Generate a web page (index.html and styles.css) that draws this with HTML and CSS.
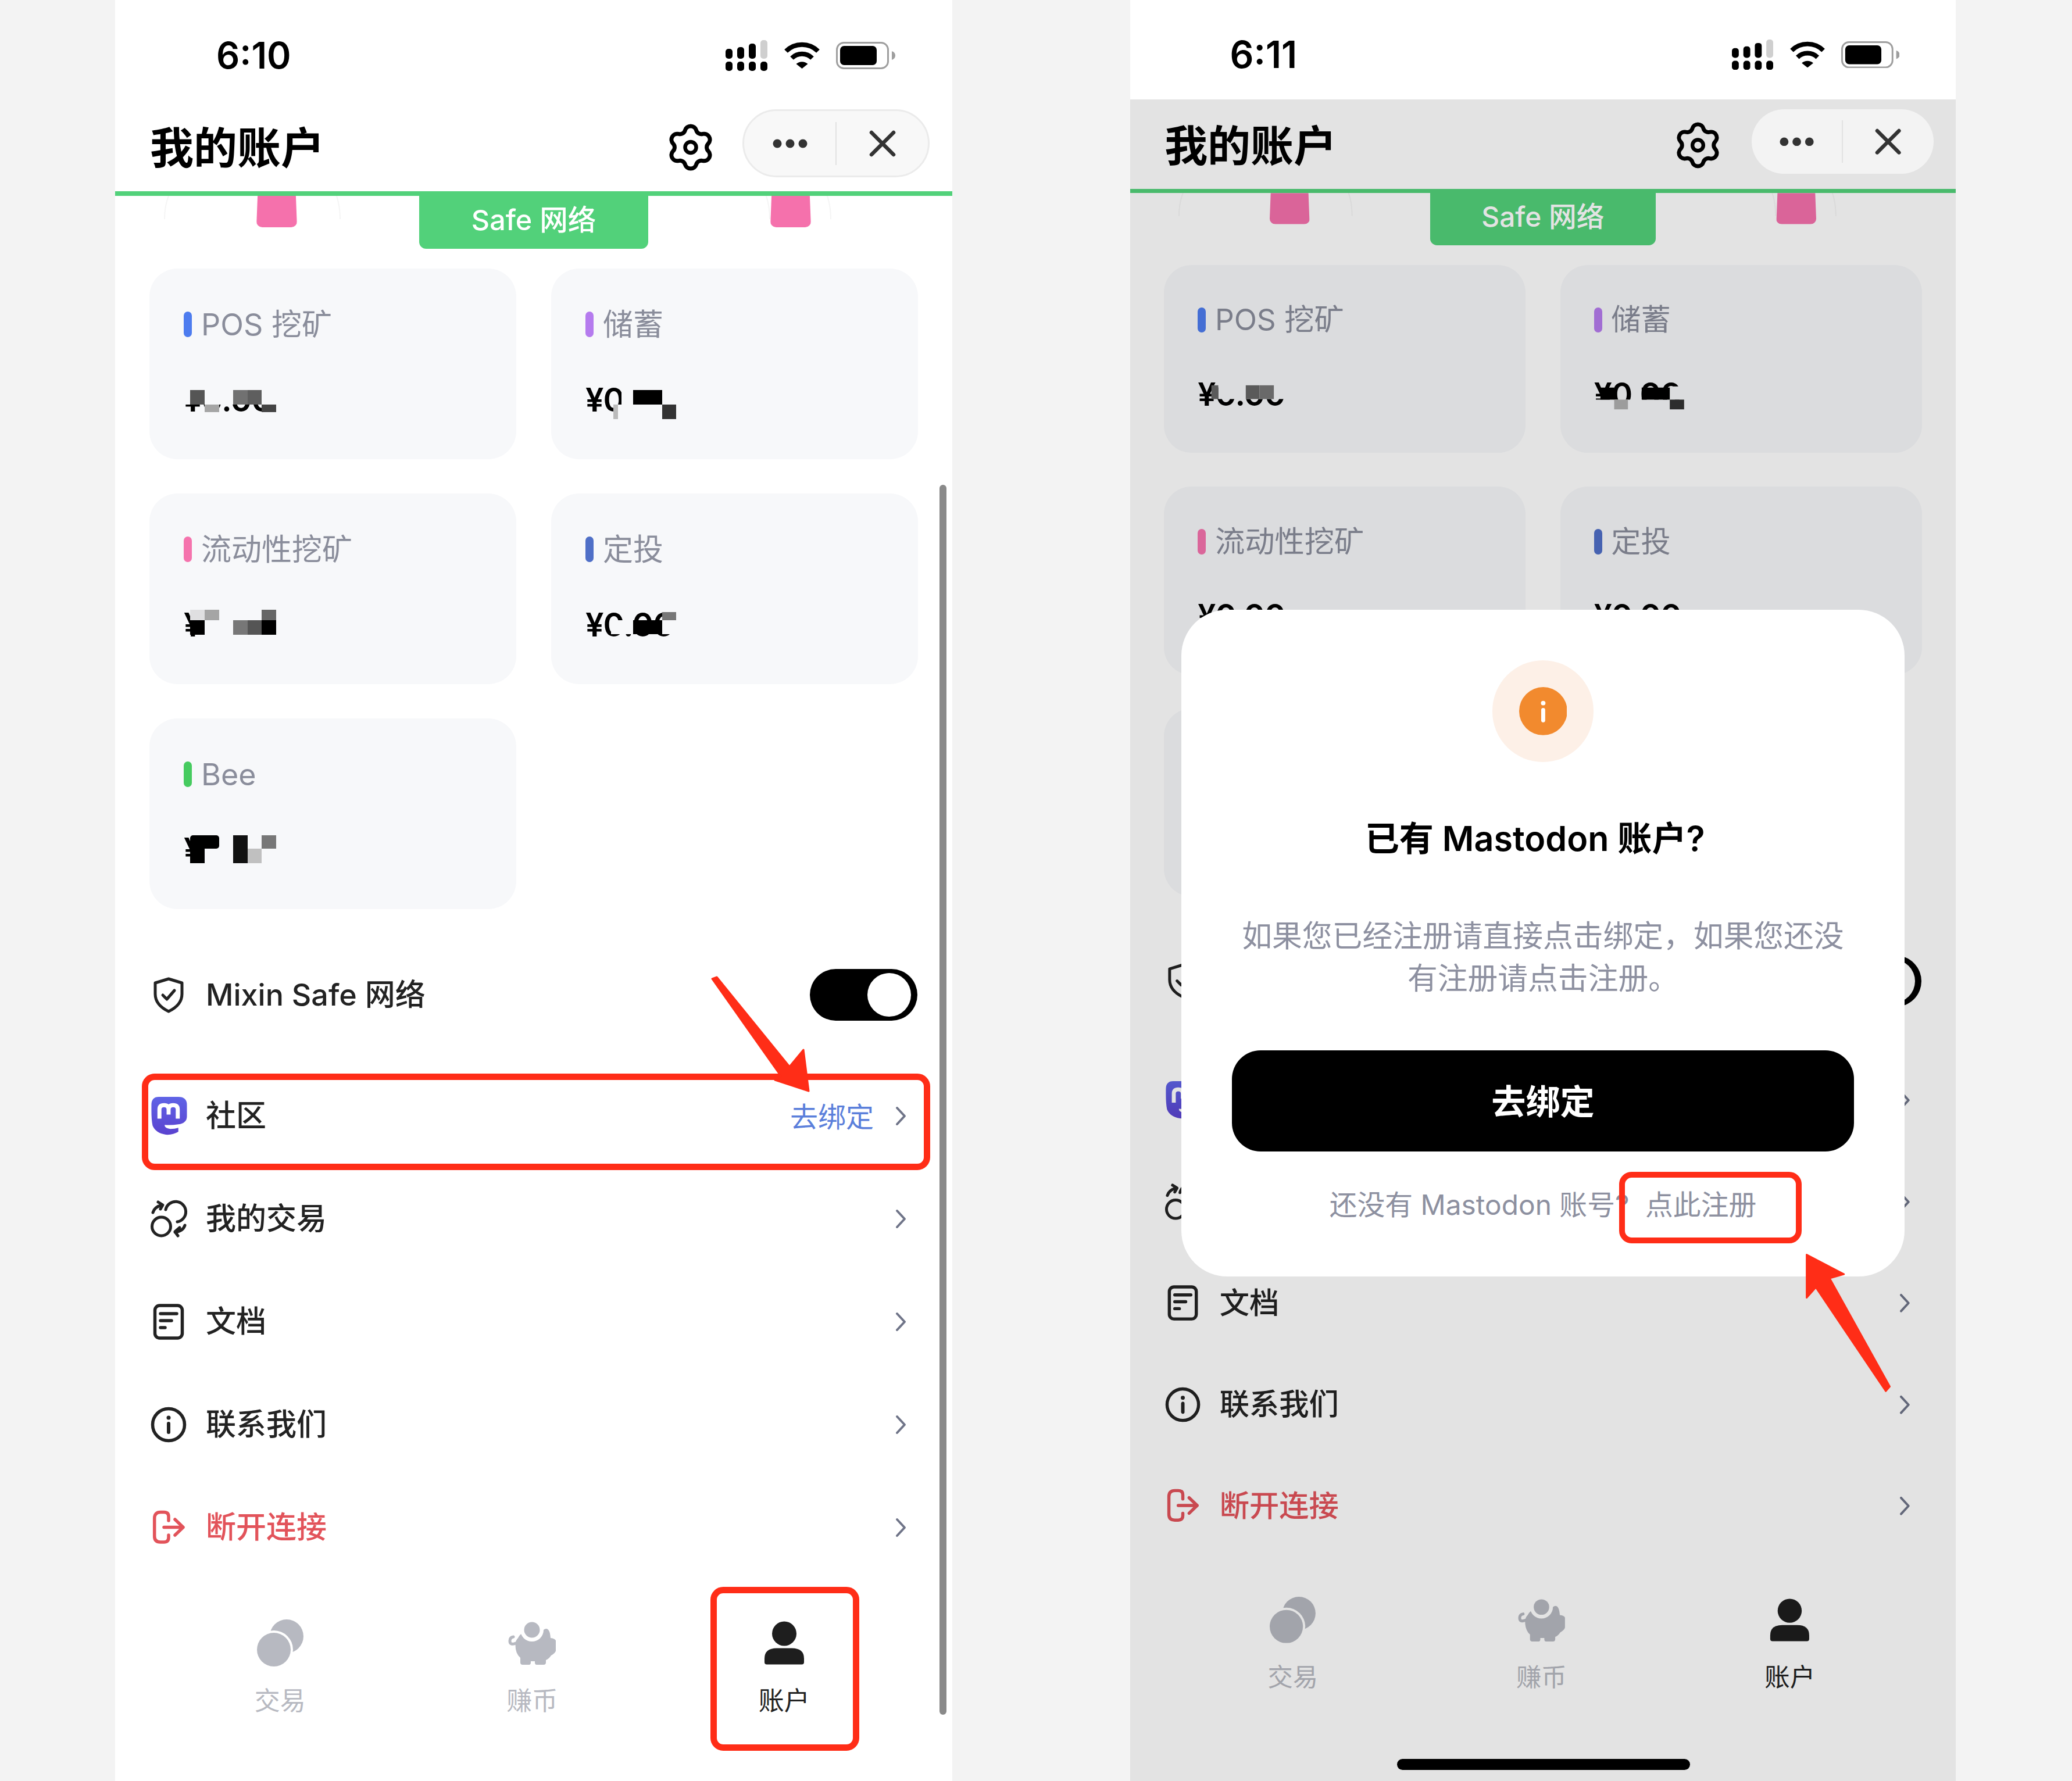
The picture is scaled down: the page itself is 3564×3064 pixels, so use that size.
FILE: index.html
```html
<!DOCTYPE html>
<html lang="zh">
<head>
  <meta charset="UTF-8">
  <title>我的账户</title>
  <link rel="stylesheet" href="styles.css">
</head>
<body>
  <svg class="sprite" width="0" height="0">
    <defs>
      <linearGradient id="masto" x1="0" y1="0" x2="0" y2="1">
        <stop offset="0" stop-color="#5f63e6"/>
        <stop offset="1" stop-color="#5a42cf"/>
      </linearGradient>
    </defs>
    <symbol id="i-signal" viewBox="0 0 73 53">
      <rect x="0" y="15" width="12" height="17" rx="5"/>
      <rect x="20" y="12" width="12" height="20" rx="5"/>
      <rect x="40" y="6" width="12" height="26" rx="5"/>
      <rect x="60" y="0" width="12" height="32" rx="5" fill="#cfcfcf"/>
      <rect x="0" y="37" width="12" height="16" rx="5"/>
      <rect x="20" y="37" width="12" height="16" rx="5"/>
      <rect x="40" y="37" width="12" height="16" rx="5"/>
      <rect x="60" y="37" width="12" height="16" rx="5"/>
    </symbol>
    <symbol id="i-wifi" viewBox="0 0 63 46">
      <path d="M4 16A39 39 0 0 1 59 16" fill="none" stroke="#000" stroke-width="8"/>
      <path d="M14 28A25 25 0 0 1 49 28" fill="none" stroke="#000" stroke-width="8"/>
      <path d="M21.5 38A15 15 0 0 1 41.5 38L31.5 46Z"/>
    </symbol>
    <symbol id="i-battery" viewBox="0 0 102 47">
      <rect x="1.5" y="1.5" width="88" height="44" rx="12" fill="none" stroke="#9e9e9e" stroke-width="3"/>
      <rect x="7" y="7" width="63" height="33" rx="7"/>
      <path d="M96 16Q102 18 102 23.5Q102 29 96 31Z" fill="#9e9e9e"/>
    </symbol>
    <symbol id="i-gear" viewBox="0 0 74 81">
      <path d="M27.42 11.02A10 10 0 0 1 46.58 11.02A9 9 0 0 0 57.74 17.46A10 10 0 0 1 67.32 34.05A9 9 0 0 0 67.32 46.95A10 10 0 0 1 57.74 63.54A9 9 0 0 0 46.58 69.98A10 10 0 0 1 27.42 69.98A9 9 0 0 0 16.26 63.54A10 10 0 0 1 6.68 46.95A9 9 0 0 0 6.68 34.05A10 10 0 0 1 16.26 17.46A9 9 0 0 0 27.42 11.02Z" fill="none" stroke="#000" stroke-width="7" stroke-linejoin="round"/>
      <circle cx="37" cy="40.5" r="9.5" fill="none" stroke="#000" stroke-width="6.5"/>
    </symbol>
    <symbol id="i-shield" viewBox="0 0 66 66">
      <path d="M33 5 L56 12 V31 Q56 50 33 61 Q10 50 10 31 V12Z" fill="none" stroke="#222" stroke-width="5" stroke-linejoin="round"/>
      <path d="M23 33 L30 40 L43 25" fill="none" stroke="#222" stroke-width="5" stroke-linecap="round" stroke-linejoin="round"/>
    </symbol>
    <symbol id="i-masto" viewBox="0 0 66 67">
      <path d="M16 0H50Q65 0 65 14V34Q65 46 50 48Q38 50 26 49Q26 55 36 56Q44 56 50 54V61Q40 67 28 66Q10 63 5 50Q3 40 3 24V14Q3 0 16 0Z" fill="url(#masto)"/>
      <path d="M17 38V22Q17 14.5 25 14.5Q33 14.5 33 22V31M33 22Q33 14.5 41 14.5Q49 14.5 49 22V38" fill="none" stroke="#fff" stroke-width="7"/>
    </symbol>
    <symbol id="i-swap" viewBox="0 0 66 66">
      <circle cx="20.5" cy="46" r="16" fill="none" stroke="#222" stroke-width="5"/>
      <path d="M28 17A17.5 17.5 0 1 1 48 38" fill="none" stroke="#222" stroke-width="5" stroke-linecap="round"/>
      <path d="M6 22Q9 12 22 9M15 4L23 9L19 16" fill="none" stroke="#222" stroke-width="5" stroke-linecap="round" stroke-linejoin="round"/>
      <path d="M61 44Q58 54 44 56M52 48L44 55L49 62" fill="none" stroke="#222" stroke-width="5" stroke-linecap="round" stroke-linejoin="round"/>
    </symbol>
    <symbol id="i-doc" viewBox="0 0 66 66">
      <rect x="9.5" y="5" width="47" height="56" rx="8" fill="none" stroke="#222" stroke-width="5.5"/>
      <path d="M19 19H47M19 31H38M19 43H27" fill="none" stroke="#222" stroke-width="5.5" stroke-linecap="round"/>
    </symbol>
    <symbol id="i-info" viewBox="0 0 66 66">
      <circle cx="33" cy="33" r="27.5" fill="none" stroke="#222" stroke-width="5.5"/>
      <circle cx="33" cy="21" r="3.5" fill="#222"/>
      <path d="M33 31V46" fill="none" stroke="#222" stroke-width="6" stroke-linecap="round"/>
    </symbol>
    <symbol id="i-logout" viewBox="0 0 66 66">
      <path d="M33 21V14Q33 6.5 25 6.5H19Q8.7 6.5 8.7 17V48Q8.7 58 19 58H25Q33 58 33 50V46" fill="none" stroke="#e2535a" stroke-width="5.5" stroke-linecap="round"/>
      <path d="M25 32.5H58M44 19L58 32.5L44 46" fill="none" stroke="#e2535a" stroke-width="5.5" stroke-linecap="round" stroke-linejoin="round"/>
    </symbol>
    <symbol id="i-chevron" viewBox="0 0 19 34">
      <path d="M3 3L16 17L3 31" fill="none" stroke="#6f7488" stroke-width="4" stroke-linecap="round" stroke-linejoin="round"/>
    </symbol>
    <symbol id="i-coins" viewBox="0 0 82 81">
      <circle cx="52" cy="29" r="29"/>
      <circle cx="30" cy="52" r="33" fill="#fff"/>
      <circle cx="30" cy="52" r="29"/>
    </symbol>
    <symbol id="i-piggy" viewBox="0 0 82 81">
      <path d="M17 32Q20 26 24 24L58 24Q60 16 66 16Q72 17 73 32Q82 33 82.5 38V52Q82 58 74 62Q70 68 65 70V74Q65 78 61 78H49Q46 78 46 74V72H39V74Q39 78 36 78H25Q21 78 21 74V66Q12 58 12.5 42Q13 36 17 32Z"/>
      <path d="M13 41Q3 45 3 37Q3 31 9 30" fill="none" stroke="currentColor" stroke-width="5" stroke-linecap="round"/>
      <circle cx="41" cy="18" r="20" fill="#fff"/>
      <circle cx="41" cy="18" r="13.5"/>
    </symbol>
    <symbol id="i-person" viewBox="-7 -3.5 82 81">
      <circle cx="34" cy="21" r="21"/>
      <path d="M0 70V64Q0 46 21 46H47Q68 46 68 64V70Q68 74 64 74H4Q0 74 0 70Z"/>
    </symbol>
  </svg>

  <section class="phone">
    <div class="status">
      <span class="time">6:10</span>
      <div class="status-icons">
        <svg class="ic-signal"><use href="#i-signal"/></svg>
        <svg class="ic-wifi"><use href="#i-wifi"/></svg>
        <svg class="ic-battery"><use href="#i-battery"/></svg>
      </div>
    </div>
    <header class="nav">
      <h1 class="nav-title">我的账户</h1>
      <svg class="ic-gear"><use href="#i-gear"/></svg>
      <div class="capsule">
        <span class="capsule-half">
          <svg class="ic-dots" viewBox="0 0 60 16"><circle cx="8" cy="8" r="7.5"/><circle cx="30" cy="8" r="7.5"/><circle cx="52" cy="8" r="7.5"/></svg>
        </span>
        <span class="capsule-line"></span>
        <span class="capsule-half">
          <svg class="ic-close" viewBox="0 0 46 46"><path d="M4 4L42 42M42 4L4 42"/></svg>
        </span>
      </div>
    </header>
    <div class="banner">
      <svg class="banner-arcs" viewBox="0 0 1440 60"><path d="M92 0Q85 18 85 40M381 0Q387 18 387 40M608 0Q601 18 601 40M700 0Q707 18 707 40M1120 0Q1126 18 1126 40M1225 0Q1231 18 1231 40M1449 0Q1442 18 1442 40M1548 0Q1554 18 1554 40"/></svg>
      <span class="ribbon"></span>
      <span class="banner-tab">Safe 网络</span>
      <span class="ribbon"></span>
    </div>
    <main class="content">
      <div class="cards">
        <div class="card">
          <div class="card-label"><i class="bar bar-blue"></i><span class="card-name">POS 挖矿</span></div>
          <div class="card-value">¥0.00
            <svg class="mosaic" viewBox="0 0 180 60">
              <rect class="hide" x="-4" y="0" width="176" height="36"/>
              <rect x="11" y="11" width="25" height="25" fill="#555"/>
              <rect x="36" y="36" width="25" height="13" fill="#a5a5a5"/>
              <rect x="85" y="11" width="25" height="25" fill="#717171"/>
              <rect x="110" y="11" width="24" height="25" fill="#5e5e5e"/>
              <rect x="134" y="36" width="25" height="13" fill="#444"/>
            </svg>
          </div>
        </div>
        <div class="card">
          <div class="card-label"><i class="bar bar-purple"></i><span class="card-name">储蓄</span></div>
          <div class="card-value">¥0.00
            <svg class="mosaic" viewBox="0 0 180 60">
              <rect class="hide" x="62" y="0" width="100" height="36"/>
              <rect class="hide" x="48" y="36" width="84" height="25"/>
              <rect x="82" y="11" width="50" height="25" fill="#000"/>
              <rect x="48" y="36" width="8" height="25" fill="#bbb"/>
              <rect x="132" y="36" width="24" height="25" fill="#333"/>
            </svg>
          </div>
        </div>
        <div class="card">
          <div class="card-label"><i class="bar bar-pink"></i><span class="card-name">流动性挖矿</span></div>
          <div class="card-value">¥0.00
            <svg class="mosaic" viewBox="0 0 180 60">
              <rect class="hide" x="36" y="0" width="126" height="56"/>
              <rect x="11" y="2" width="25" height="18" fill="#dfdfe1"/>
              <rect x="36" y="2" width="25" height="18" fill="#a5a5a5"/>
              <rect x="11" y="20" width="25" height="25" fill="#000"/>
              <rect x="134" y="2" width="25" height="18" fill="#666"/>
              <rect x="85" y="20" width="25" height="25" fill="#777"/>
              <rect x="110" y="20" width="24" height="25" fill="#555"/>
              <rect x="134" y="20" width="25" height="25" fill="#000"/>
            </svg>
          </div>
        </div>
        <div class="card">
          <div class="card-label"><i class="bar bar-indigo"></i><span class="card-name">定投</span></div>
          <div class="card-value">¥0.00
            <svg class="mosaic" viewBox="0 0 180 60">
              <rect class="hide" x="44" y="20" width="38" height="24"/>
              <rect x="82" y="20" width="50" height="24" fill="#000"/>
              <rect x="132" y="6" width="24" height="14" fill="#777"/>
              <rect class="hide" x="132" y="20" width="24" height="24"/>
            </svg>
          </div>
        </div>
        <div class="card">
          <div class="card-label"><i class="bar bar-green"></i><span class="card-name card-name-plain">Bee</span></div>
          <div class="card-value">¥0.00
            <svg class="mosaic" viewBox="0 0 180 60">
              <rect class="hide" x="36" y="0" width="126" height="56"/>
              <rect x="11" y="3" width="50" height="23" rx="5" fill="#000"/>
              <rect x="11" y="26" width="25" height="25" fill="#000"/>
              <rect x="85" y="3" width="25" height="48" fill="#111"/>
              <rect x="110" y="26" width="24" height="25" fill="#c0c0c0"/>
              <rect x="134" y="3" width="25" height="23" fill="#777"/>
            </svg>
          </div>
        </div>
      </div>
      <div class="row row-safe">
        <svg class="row-icon"><use href="#i-shield"/></svg>
        <span class="row-text">Mixin Safe 网络</span>
        <span class="toggle"></span>
      </div>
      <div class="rows">
        <div class="row">
          <svg class="row-icon"><use href="#i-masto"/></svg>
          <span class="row-text">社区</span>
          <span class="row-extra">去绑定</span>
          <svg class="chevron"><use href="#i-chevron"/></svg>
        </div>
        <div class="row">
          <svg class="row-icon"><use href="#i-swap"/></svg>
          <span class="row-text">我的交易</span>
          <svg class="chevron"><use href="#i-chevron"/></svg>
        </div>
        <div class="row">
          <svg class="row-icon"><use href="#i-doc"/></svg>
          <span class="row-text">文档</span>
          <svg class="chevron"><use href="#i-chevron"/></svg>
        </div>
        <div class="row">
          <svg class="row-icon"><use href="#i-info"/></svg>
          <span class="row-text">联系我们</span>
          <svg class="chevron"><use href="#i-chevron"/></svg>
        </div>
        <div class="row">
          <svg class="row-icon"><use href="#i-logout"/></svg>
          <span class="row-text row-danger">断开连接</span>
          <svg class="chevron"><use href="#i-chevron"/></svg>
        </div>
      </div>
    </main>
    <nav class="tabs">
      <div class="tab"><svg class="tab-icon"><use href="#i-coins"/></svg><span>交易</span></div>
      <div class="tab"><svg class="tab-icon"><use href="#i-piggy"/></svg><span>赚币</span></div>
      <div class="tab tab-active"><svg class="tab-icon"><use href="#i-person"/></svg><span>账户</span></div>
    </nav>
    <span class="scrollbar"></span>
    <span class="redbox redbox-row"></span>
    <span class="redbox redbox-tab"></span>
    <svg class="marks" viewBox="0 0 1440 3064"><polygon points="1027,1684 1035,1681 1160,1835 1184,1806 1193,1877 1135,1858 1145,1851"/></svg>
  </section>

  <section class="phone phone-dimmed">
    <div class="status">
      <span class="time">6:11</span>
      <div class="status-icons">
        <svg class="ic-signal"><use href="#i-signal"/></svg>
        <svg class="ic-wifi"><use href="#i-wifi"/></svg>
        <svg class="ic-battery"><use href="#i-battery"/></svg>
      </div>
    </div>
    <header class="nav">
      <h1 class="nav-title">我的账户</h1>
      <svg class="ic-gear"><use href="#i-gear"/></svg>
      <div class="capsule">
        <span class="capsule-half">
          <svg class="ic-dots" viewBox="0 0 60 16"><circle cx="8" cy="8" r="7.5"/><circle cx="30" cy="8" r="7.5"/><circle cx="52" cy="8" r="7.5"/></svg>
        </span>
        <span class="capsule-line"></span>
        <span class="capsule-half">
          <svg class="ic-close" viewBox="0 0 46 46"><path d="M4 4L42 42M42 4L4 42"/></svg>
        </span>
      </div>
    </header>
    <div class="banner">
      <svg class="banner-arcs" viewBox="0 0 1440 60"><path d="M92 0Q85 18 85 40M381 0Q387 18 387 40M608 0Q601 18 601 40M700 0Q707 18 707 40M1120 0Q1126 18 1126 40M1225 0Q1231 18 1231 40M1449 0Q1442 18 1442 40M1548 0Q1554 18 1554 40"/></svg>
      <span class="ribbon"></span>
      <span class="banner-tab">Safe 网络</span>
      <span class="ribbon"></span>
    </div>
    <main class="content">
      <div class="cards">
        <div class="card">
          <div class="card-label"><i class="bar bar-blue"></i><span class="card-name">POS 挖矿</span></div>
          <div class="card-value">¥0.00
            <svg class="mosaic" viewBox="0 0 180 60">
              <rect class="hide" x="36" y="0" width="124" height="36"/>
              <rect x="24" y="12" width="12" height="24" fill="#666"/>
              <rect x="84" y="12" width="24" height="24" fill="#666"/>
              <rect x="108" y="12" width="25" height="24" fill="#777"/>
            </svg>
          </div>
        </div>
        <div class="card">
          <div class="card-label"><i class="bar bar-purple"></i><span class="card-name">储蓄</span></div>
          <div class="card-value">¥0.00
            <svg class="mosaic" viewBox="0 0 180 60">
              <rect class="hide" x="0" y="37" width="162" height="17"/>
              <rect class="hide" x="132" y="14" width="26" height="23"/>
              <rect x="11" y="16" width="24" height="21" fill="#000"/>
              <rect x="35" y="37" width="24" height="17" fill="#b0b0b0"/>
              <rect x="83" y="16" width="49" height="21" fill="#000"/>
              <rect x="132" y="37" width="25" height="17" fill="#333"/>
            </svg>
          </div>
        </div>
        <div class="card">
          <div class="card-label"><i class="bar bar-pink"></i><span class="card-name">流动性挖矿</span></div>
          <div class="card-value">¥0.00</div>
        </div>
        <div class="card">
          <div class="card-label"><i class="bar bar-indigo"></i><span class="card-name">定投</span></div>
          <div class="card-value">¥0.00</div>
        </div>
        <div class="card">
          <div class="card-label"><i class="bar bar-green"></i><span class="card-name card-name-plain">Bee</span></div>
          <div class="card-value">¥0.00</div>
        </div>
      </div>
      <div class="row row-safe">
        <svg class="row-icon"><use href="#i-shield"/></svg>
        <span class="row-text">Mixin Safe 网络</span>
        <span class="toggle"></span>
      </div>
      <div class="rows">
        <div class="row">
          <svg class="row-icon"><use href="#i-masto"/></svg>
          <span class="row-text">社区</span>
          <svg class="chevron"><use href="#i-chevron"/></svg>
        </div>
        <div class="row">
          <svg class="row-icon"><use href="#i-swap"/></svg>
          <span class="row-text">我的交易</span>
          <svg class="chevron"><use href="#i-chevron"/></svg>
        </div>
        <div class="row">
          <svg class="row-icon"><use href="#i-doc"/></svg>
          <span class="row-text">文档</span>
          <svg class="chevron"><use href="#i-chevron"/></svg>
        </div>
        <div class="row">
          <svg class="row-icon"><use href="#i-info"/></svg>
          <span class="row-text">联系我们</span>
          <svg class="chevron"><use href="#i-chevron"/></svg>
        </div>
        <div class="row">
          <svg class="row-icon"><use href="#i-logout"/></svg>
          <span class="row-text row-danger">断开连接</span>
          <svg class="chevron"><use href="#i-chevron"/></svg>
        </div>
      </div>
    </main>
    <nav class="tabs">
      <div class="tab"><svg class="tab-icon"><use href="#i-coins"/></svg><span>交易</span></div>
      <div class="tab"><svg class="tab-icon"><use href="#i-piggy"/></svg><span>赚币</span></div>
      <div class="tab tab-active"><svg class="tab-icon"><use href="#i-person"/></svg><span>账户</span></div>
    </nav>
    <div class="dim"></div>
    <span class="home-bar"></span>
    <div class="modal">
      <div class="modal-badge">
        <svg class="modal-info" viewBox="0 0 84 84">
          <circle cx="42" cy="42" r="42" fill="#f28a2e"/>
          <circle cx="42" cy="28" r="4" fill="#fff"/>
          <path d="M42 40V58" stroke="#fff" stroke-width="7" stroke-linecap="round"/>
        </svg>
      </div>
      <h2 class="modal-title">已有 Mastodon 账户?</h2>
      <p class="modal-text">如果您已经注册请直接点击绑定，如果您还没有注册请点击注册。</p>
      <button class="modal-btn">去绑定</button>
      <p class="modal-foot">还没有 Mastodon 账号?<span>点此注册</span></p>
    </div>
    <span class="redbox redbox-foot"></span>
    <svg class="marks" viewBox="0 0 1440 3107"><polygon points="1180,2189 1245,2223 1220,2230 1325,2419 1318,2427 1196,2246 1180,2264"/></svg>
  </section>
</body>
</html>
```
FILE: styles.css
```css
* {
  box-sizing: border-box;
}

body {
  margin: 0;
  width: 3564px;
  height: 3064px;
  overflow: hidden;
  display: flex;
  gap: 306px;
  padding-left: 198px;
  background: #f3f3f3;
  font-family: Inter, "Noto Sans CJK SC", sans-serif;
  color: #222;
}

.sprite {
  position: absolute;
}

.phone {
  position: relative;
  flex: none;
  width: 1440px;
  height: 3064px;
  overflow: hidden;
  background: #fff;
}

.phone-dimmed {
  zoom: 0.98611;
  height: 3107px;
}

/* status bar */
.status {
  display: flex;
  align-items: center;
  justify-content: space-between;
  height: 180px;
  padding: 10px 98px 0 174px;
}

.time {
  font-size: 63px;
  font-weight: 600;
  color: #000;
}

.phone-dimmed .time {
  font-size: 65px;
}

.status-icons {
  display: flex;
  align-items: center;
  gap: 27px;
}

.ic-signal { width: 73px; height: 53px; }
.ic-wifi { width: 63px; height: 46px; }
.ic-battery { width: 102px; height: 47px; }

/* nav */
.nav {
  display: flex;
  align-items: center;
  height: 157px;
  padding: 0 39px 3px 60px;
  border-bottom: 8px solid #52d17a;
}

.nav-title {
  flex: 1;
  margin: 0 0 8px;
  font-size: 75px;
  font-weight: 700;
  color: #000;
}

.ic-gear {
  width: 74px;
  height: 81px;
  margin-right: 52px;
}

.phone-dimmed .ic-gear {
  margin-right: 57px;
}

.capsule {
  position: relative;
  display: flex;
  align-items: center;
  width: 322px;
  height: 117px;
  margin-bottom: 13px;
  background: #f8f8f8;
  border: 3px solid #ebebeb;
  border-radius: 59px;
}

.phone-dimmed .capsule {
  z-index: 3;
  width: 317px;
  height: 113px;
  background: #f3f3f3;
  border: none;
}

.capsule-half {
  flex: 1;
  display: flex;
  justify-content: center;
}

.capsule-line {
  width: 2px;
  height: 74px;
  background: #e2e2e2;
}

.ic-dots {
  width: 60px;
  height: 16px;
  fill: #333;
}

.ic-close {
  width: 46px;
  height: 46px;
  fill: none;
  stroke: #333;
  stroke-width: 6.5;
  stroke-linecap: round;
}

/* banner */
.banner {
  position: relative;
  display: flex;
  justify-content: center;
  gap: 210px;
  height: 91px;
}

.banner-arcs {
  position: absolute;
  left: 0;
  top: 0;
  width: 1440px;
  height: 60px;
  fill: none;
  stroke: #f5f5f5;
  stroke-width: 2;
}

.ribbon {
  position: relative;
  width: 70px;
  height: 54px;
  background: #f571ac;
  border-radius: 0 0 10px 10px;
  clip-path: polygon(3% 0, 97% 0, 100% 100%, 0 100%);
}

.banner-tab {
  position: relative;
  display: flex;
  align-items: center;
  justify-content: center;
  width: 394px;
  height: 91px;
  padding-bottom: 16px;
  background: #52d17a;
  border-radius: 0 0 12px 12px;
  color: #fff;
  font-size: 48.5px;
  font-weight: 500;
}

/* cards */
.content {
  padding: 34px 60px 0 59px;
}

.cards {
  display: grid;
  grid-template-columns: 631px 631px;
  grid-auto-rows: 328px;
  gap: 59px 60px;
}

.card {
  padding: 74px 0 0 59px;
  background: #f7f8fa;
  border-radius: 48px;
}

.card-label {
  display: flex;
  align-items: center;
  gap: 16px;
  height: 44px;
  color: #8a8d9b;
}

.card-name {
  padding-bottom: 8px;
  font-size: 52px;
}

.card-name-plain {
  padding-bottom: 0;
}

.bar {
  flex: none;
  width: 14px;
  height: 44px;
  border-radius: 7px;
}

.bar-blue { background: #4d7cef; }
.bar-purple { background: #b57bee; }
.bar-pink { background: #f573ad; }
.bar-indigo { background: #4f6fc7; }
.bar-green { background: #46cb5f; }

.card-value {
  position: relative;
  margin-top: 80px;
  font-size: 56px;
  line-height: 56px;
  font-weight: 600;
  letter-spacing: -1px;
  color: #000;
}

.mosaic {
  position: absolute;
  left: 0;
  top: 0;
  width: 180px;
  height: 60px;
  overflow: visible;
}

.mosaic .hide {
  fill: #f7f8fa;
}

/* rows */
.row {
  display: flex;
  align-items: center;
  height: 177px;
  padding-right: 19px;
}

.row-safe {
  margin-top: 59px;
  padding-right: 0;
}

.rows {
  margin-top: 31px;
}

.row-icon {
  flex: none;
  width: 66px;
  height: 66px;
  margin-right: 31px;
}

.row-text {
  flex: 1;
  padding-bottom: 8px;
  font-size: 52px;
  font-weight: 500;
}

.row-danger {
  color: #e2535a;
}

.row-extra {
  margin-right: 37px;
  padding-bottom: 4px;
  font-size: 48px;
  color: #5b7fdb;
}

.chevron {
  width: 19px;
  height: 34px;
}

.toggle {
  position: relative;
  width: 185px;
  height: 89px;
  background: #000;
  border-radius: 45px;
}

.toggle::after {
  content: "";
  position: absolute;
  right: 11px;
  top: 7px;
  width: 75px;
  height: 75px;
  background: #fff;
  border-radius: 50%;
}

/* tabs */
.tabs {
  display: grid;
  grid-template-columns: repeat(3, 433.5px);
  padding: 70px 0 0 67px;
}

.tab {
  display: flex;
  flex-direction: column;
  align-items: center;
  color: #b7b9c1;
  fill: #b7b9c1;
  font-size: 44px;
  line-height: 60px;
}

.tab-icon {
  width: 82px;
  height: 81px;
  margin-bottom: 29px;
}

.tab-active {
  color: #222;
  fill: #1e1e1e;
}

/* overlays */
.scrollbar {
  position: absolute;
  left: 1418px;
  top: 834px;
  width: 12px;
  height: 2116px;
  background: #8a8a8a;
  border-radius: 6px;
}

.redbox {
  position: absolute;
  z-index: 6;
  border: 11px solid #ff2d17;
  border-radius: 22px;
}

.redbox-row {
  left: 46px;
  top: 1847px;
  width: 1356px;
  height: 166px;
}

.redbox-tab {
  left: 1024px;
  top: 2730px;
  width: 256px;
  height: 282px;
}

.redbox-foot {
  left: 853px;
  top: 2044px;
  width: 318px;
  height: 125px;
}

.marks {
  position: absolute;
  z-index: 7;
  left: 0;
  top: 0;
  width: 1440px;
  height: 100%;
  fill: #ff2d17;
  stroke: #ff2d17;
  stroke-width: 3;
  stroke-linejoin: round;
  pointer-events: none;
}

.dim {
  position: absolute;
  z-index: 2;
  left: 0;
  right: 0;
  top: 173px;
  bottom: 0;
  background: rgba(0, 0, 0, 0.11);
}

.home-bar {
  position: absolute;
  z-index: 3;
  left: 465px;
  top: 3069px;
  width: 512px;
  height: 19px;
  background: #000;
  border-radius: 10px;
}

/* modal */
.modal {
  position: absolute;
  z-index: 4;
  left: 89px;
  top: 1064px;
  display: flex;
  flex-direction: column;
  align-items: center;
  width: 1262px;
  height: 1163px;
  padding-top: 88px;
  background: #fff;
  border-radius: 80px;
}

.modal-badge {
  display: flex;
  align-items: center;
  justify-content: center;
  width: 177px;
  height: 177px;
  background: #fdf0e7;
  border-radius: 50%;
}

.modal-info {
  width: 84px;
  height: 84px;
}

.modal-title {
  margin: 95px 28px 0 0;
  font-size: 60px;
  line-height: 80px;
  font-weight: 600;
  color: #000;
}

.modal-text {
  width: 1070px;
  margin: 92px 0 0;
  font-size: 52.5px;
  line-height: 74px;
  text-align: center;
  color: #8d90a0;
}

.modal-btn {
  width: 1085px;
  height: 177px;
  margin-top: 88px;
  padding-bottom: 6px;
  background: #000;
  border: none;
  border-radius: 50px;
  color: #fff;
  font-family: inherit;
  font-size: 60px;
  font-weight: 700;
}

.modal-foot {
  margin: 64px 0 0;
  font-size: 48.5px;
  line-height: 60px;
  color: #8d90a0;
}

.modal-foot span {
  margin-left: 28px;
}
```
